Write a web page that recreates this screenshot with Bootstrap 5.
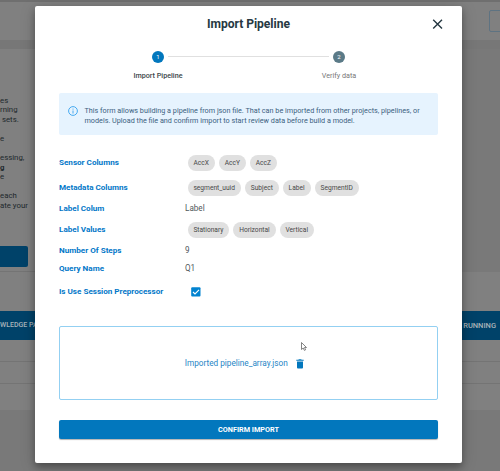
<!DOCTYPE html>
<html lang="en">
<head>
<meta charset="utf-8">
<meta name="viewport" content="width=device-width, initial-scale=1">
<title>Import Pipeline</title>
<link href="https://cdn.jsdelivr.net/npm/bootstrap@5.3.0/dist/css/bootstrap.min.css" rel="stylesheet">
<style>
body{font-family:Roboto,"Liberation Sans",sans-serif;font-size:8px;line-height:1.2;color:#263238;width:500px;height:471px;overflow:hidden;background:#787878}
.page-behind{width:500px;height:471px;background:#797979}
.strip-top{height:2px;background:#6f6f6f}
.app-bar{height:38px;background:#808080;padding:8px 0 0 489px}
.ghost-btn{width:30px;height:22px;border:1px solid #5e7382;border-radius:2px}
.app-gap{height:9px;background:#777}
.intro-pane{width:250px;height:223px;background:#808080;border-bottom:1px solid #747474}
.intro-text{padding-top:46.8px;font-size:7.8px;line-height:9.55px;color:#20282c;white-space:pre;height:197px}
.intro-btn{width:28px;height:21px;background:#004269;border-radius:0 2px 2px 0}
.table-pane{height:138px;background:#808080}
.table-head{height:29px;margin-top:39px;background:#004269;color:#a9b3b9;font-size:7.5px;font-weight:500}
.head-left{font-size:7px}
.table-line{height:22px;border-bottom:1px solid #747474}
.dialog{left:35px;top:6px;width:427px;height:457px;border-radius:2px;box-shadow:0 4px 7px rgba(0,0,0,.28),0 3px 16px rgba(0,0,0,.18);padding:0 24px}
.dialog-head{height:35px}
.dialog-title{font-size:12.1px;font-weight:700;line-height:14px;color:#263842;letter-spacing:-.05px}
.close-x{right:18px;top:12px;width:12px;height:12px}
.stepper{height:52px;padding-top:10px}
.step{width:181px}
.dot{width:12px;height:12px;border-radius:50%;color:#fff;font-size:6px;line-height:12px;background:#0277bd}
.dot-idle{background:#5b7a87}
.step-label{font-size:7.2px;line-height:10px;margin-top:8px;color:#3b454a}
.step-off{color:#777}
.step-line{left:133px;top:50px;width:161px;height:1px;background:#e0e0e0}
.info-box{height:42px;background:#e6f3fe;border-radius:2px;color:#3b617e;font-size:7.24px;line-height:10px;padding:12.500px 8px 0 9px;gap:6.500px}
.info-box svg{width:10px;height:10px}
.fields{margin-top:16px}
.field-name{width:126px;color:#0277c8;font-weight:700;font-size:8.1px}
.field-value{color:#50585c;font-size:8.15px}
.chips{gap:4px;padding-left:2.500px}
.chip{height:16px;border-radius:8px;background:#e0e0e0;color:#484848;font-size:6.65px;line-height:16px;padding:0 5.900px}
.drop-area{height:74px;margin-top:21px;border:1px solid #93d0f2;border-radius:2px;color:#1f86c6;font-size:8.22px;gap:8.500px;padding:1px 8px 0 0}
.confirm{height:19px;margin-top:20px;padding:0;background:#0277bd;border:0;border-radius:2px;color:#fff;font-size:7.25px;line-height:18px;font-weight:700;box-shadow:0 1px 1px rgba(0,0,0,.3)}
.confirm:hover{background:#01689f;color:#fff}
.h17{height:17px}.h19{height:19px}.h24{height:24px}.h25{height:25px}.h27{height:27px}
.pointer{left:300px;top:341px;width:8px;height:11px}
</style>
<script src="https://cdn.jsdelivr.net/npm/bootstrap@5.3.0/dist/js/bootstrap.bundle.min.js"></script>
</head>
<body>
<div class="page-behind" aria-hidden="true">
  <div class="strip-top"></div>
  <div class="app-bar"><div class="ghost-btn"></div></div>
  <div class="app-gap"></div>
  <div class="intro-pane">
    <div class="intro-text">es
rning
 sets.

e

essing,
<b>g</b>
e

each
ate your</div>
    <div class="intro-btn"></div>
  </div>
  <div class="table-pane overflow-hidden">
    <div class="table-head d-flex align-items-center justify-content-between"><span class="head-left">WLEDGE PACK</span><span class="pe-1">RUNNING</span></div>
    <div class="table-line"></div>
    <div class="table-line"></div>
  </div>
</div>

<div class="dialog position-absolute bg-white" role="dialog" aria-label="Import Pipeline">
  <div class="dialog-head d-flex justify-content-center align-items-center"><div class="dialog-title">Import Pipeline</div></div>
  <svg class="close-x position-absolute" viewBox="0 0 12 12" stroke="#263842" stroke-width="1.4" fill="none"><path d="M1.2 1.7l8.8 8.8M10 1.7l-8.8 8.8"/></svg>
  <div class="step-line position-absolute"></div>
  <div class="stepper d-flex justify-content-center">
    <div class="step d-flex flex-column align-items-center"><div class="dot text-center">1</div><div class="step-label fw-medium">Import Pipeline</div></div>
    <div class="step d-flex flex-column align-items-center"><div class="dot dot-idle text-center">2</div><div class="step-label step-off">Verify data</div></div>
  </div>
  <div class="info-box d-flex">
    <svg viewBox="0 0 10 10" class="flex-shrink-0" fill="none" stroke="#35a1ee"><circle cx="5" cy="5" r="4.4" stroke-width=".9"/><path d="M5 4.5v3M5 2.6v1" stroke-width=".9"/></svg>
    <div class="text-nowrap"><span>This form allows building a pipeline from json file. That can be imported from other projects, pipelines, or</span><br><span>models. Upload the file and confirm import to start review data before build a model.</span></div>
  </div>
  <div class="fields">
    <div class="d-flex align-items-center h24"><div class="field-name">Sensor Columns</div><div class="chips d-flex"><span class="chip">AccX</span><span class="chip">AccY</span><span class="chip">AccZ</span></div></div>
    <div class="d-flex align-items-center h25"><div class="field-name">Metadata Columns</div><div class="chips d-flex"><span class="chip">segment_uuid</span><span class="chip">Subject</span><span class="chip">Label</span><span class="chip">SegmentID</span></div></div>
    <div class="d-flex align-items-center h17"><div class="field-name">Label Colum</div><div class="field-value">Label</div></div>
    <div class="d-flex align-items-center h25"><div class="field-name">Label Values</div><div class="chips d-flex"><span class="chip">Stationary</span><span class="chip">Horizontal</span><span class="chip">Vertical</span></div></div>
    <div class="d-flex align-items-center h17"><div class="field-name">Number Of Steps</div><div class="field-value">9</div></div>
    <div class="d-flex align-items-center h19"><div class="field-name">Query Name</div><div class="field-value">Q1</div></div>
    <div class="d-flex align-items-center h27"><div class="field-name">Is Use Session Preprocessor</div>
      <svg class="ms-1" width="14" height="10" viewBox="-2 0 14 10"><rect x=".2" y=".2" width="9.3" height="9.3" rx="1" fill="#0283d0"/><path d="M2 5l2 2 4-4.2" fill="none" stroke="#fff" stroke-width="1.1"/></svg></div>
  </div>
  <div class="drop-area d-flex align-items-center justify-content-center">
    <span>Imported pipeline_array.json</span>
    <svg width="8" height="10" viewBox="0 0 8 10" fill="#0277bd"><path d="M.3 .8h2L2.9.2h2.2l.6.6h2v1H.3zM1 2.400h6v6.200q0 .9-.9.9H1.900Q1 9.500 1 8.600z"/></svg>
  </div>
  <button type="button" class="btn confirm w-100 d-block">CONFIRM IMPORT</button>
</div>
<svg class="pointer position-absolute" viewBox="0 0 8 11"><path d="M1.500 1.500v7l1.700-1.500 1.200 2.400 1.200-.6-1.100-2.300h2z" fill="#fff" stroke="#666" stroke-width=".8"/></svg>
</body>
</html>
